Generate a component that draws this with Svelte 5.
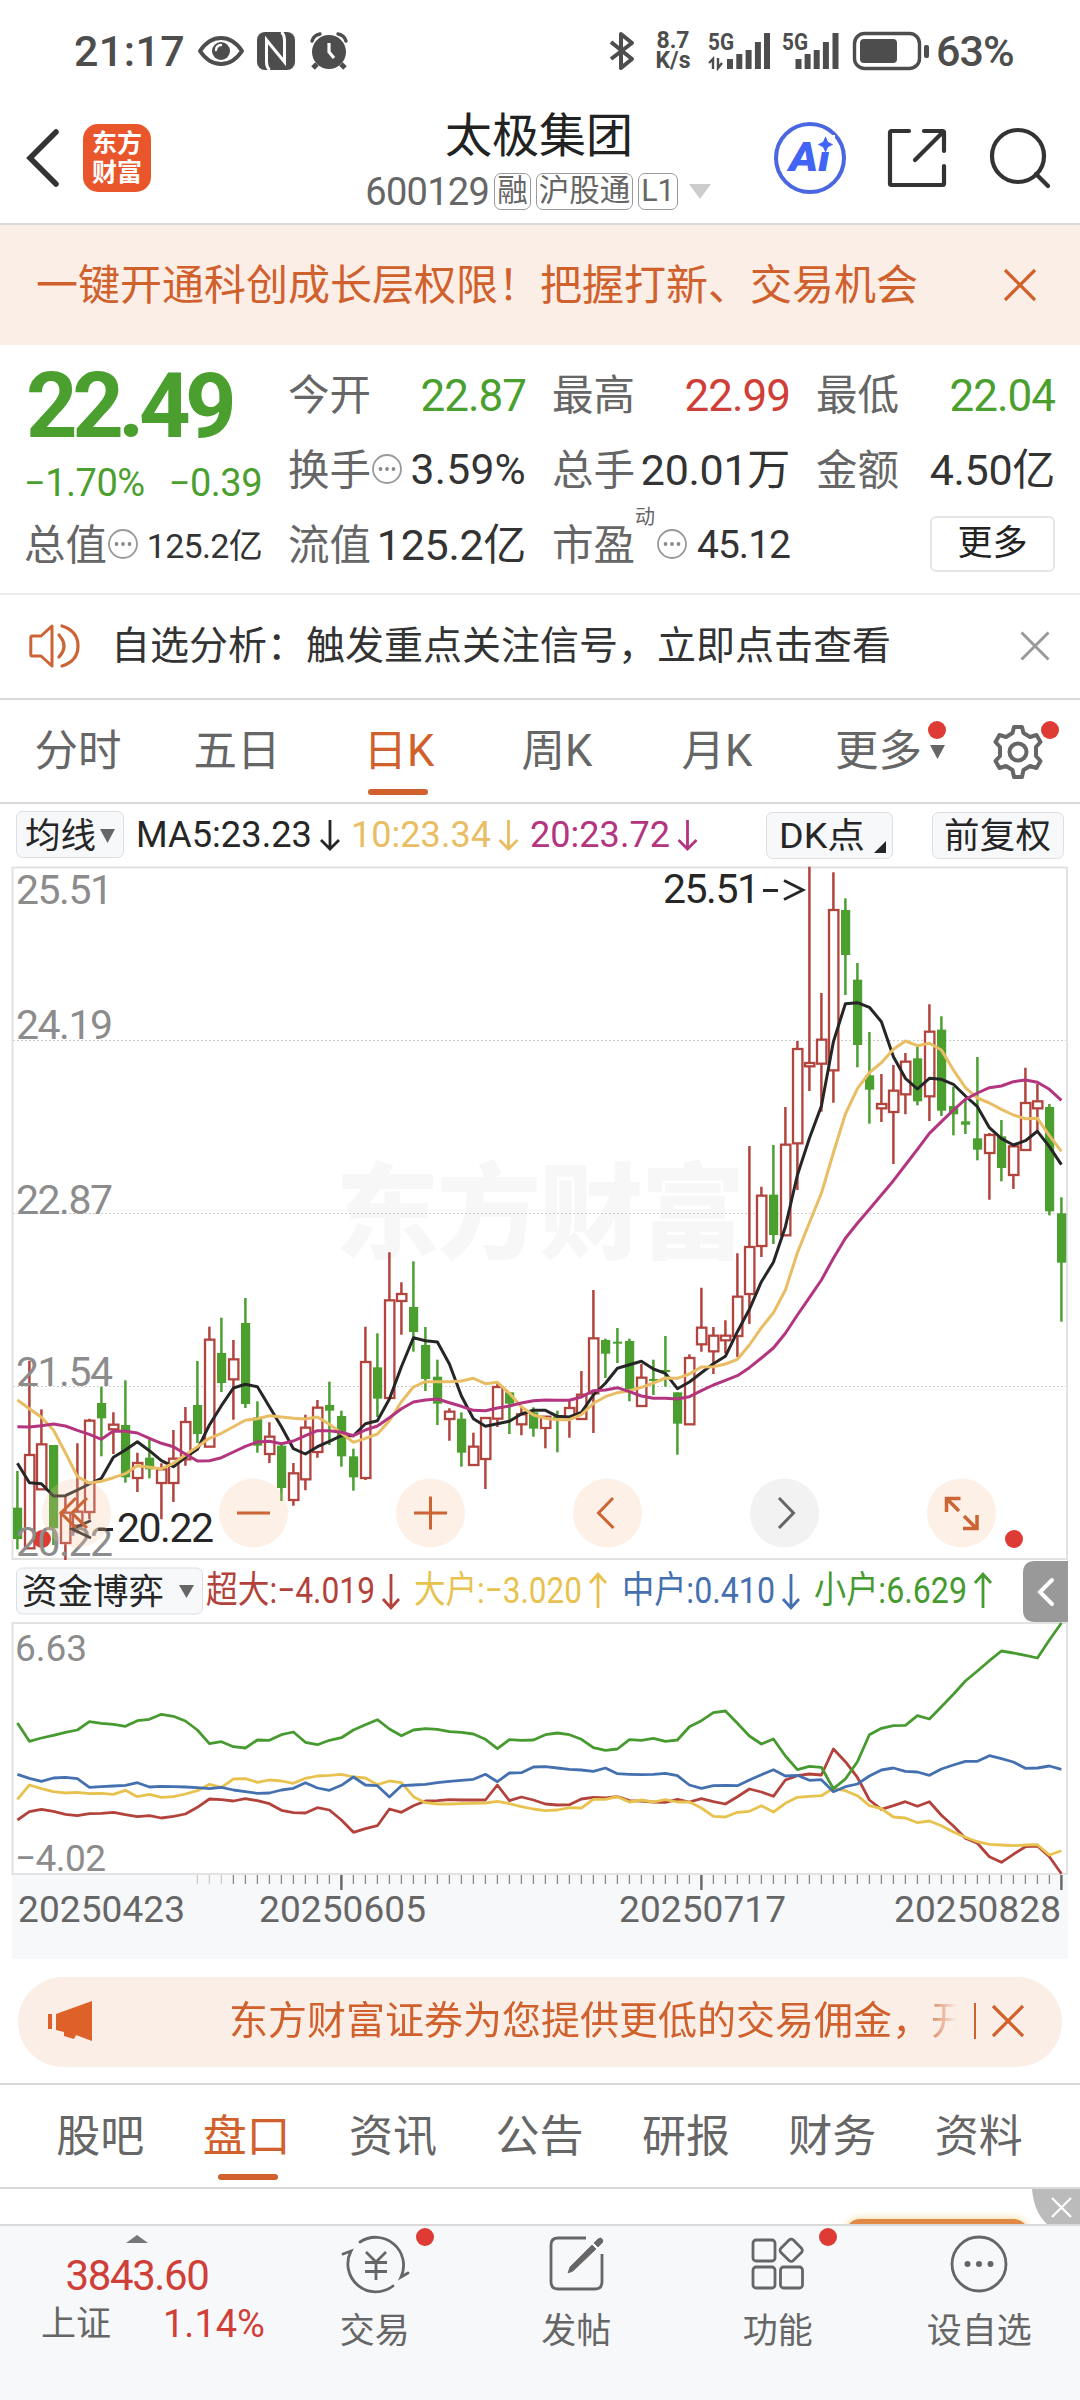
<script>
  // 日K: [涨跌, 最高, 实体上沿, 实体下沿, 最低], 单位是 1/3 像素
  const candles = [
    ['g', 873, 983, 1077, 1108], ['r', 543, 825, 1105, 1105], ['r', 688, 793, 928, 928],
    ['g', 795, 795, 1045, 1095], ['r', 950, 998, 1089, 1140], ['r', 790, 995, 1037, 1060],
    ['r', 716, 722, 996, 1018], ['g', 620, 669, 715, 829], ['r', 697, 734, 748, 822],
    ['g', 601, 735, 892, 908], ['r', 818, 849, 894, 936], ['g', 775, 833, 868, 895],
    ['r', 850, 868, 909, 1018], ['r', 750, 836, 909, 966], ['r', 681, 726, 838, 857],
    ['g', 543, 675, 762, 789], ['r', 440, 479, 800, 800], ['g', 413, 519, 609, 636],
    ['r', 480, 538, 598, 719], ['g', 354, 429, 672, 684], ['g', 664, 712, 797, 818],
    ['r', 727, 770, 822, 849], ['g', 795, 797, 924, 963], ['r', 849, 880, 960, 977],
    ['r', 704, 743, 898, 931], ['r', 660, 683, 816, 833], ['g', 605, 675, 692, 795],
    ['g', 692, 708, 829, 860], ['g', 806, 829, 892, 932], ['r', 440, 546, 894, 900],
    ['g', 460, 562, 656, 711], ['r', 217, 361, 654, 654], ['r', 307, 342, 363, 464],
    ['g', 244, 381, 456, 515], ['g', 441, 495, 597, 633], ['g', 539, 590, 671, 735],
    ['r', 685, 695, 717, 782], ['g', 697, 716, 818, 860], ['r', 758, 800, 855, 855],
    ['r', 714, 714, 837, 927], ['r', 611, 621, 716, 741], ['g', 637, 637, 671, 762],
    ['r', 680, 703, 733, 766], ['g', 682, 697, 746, 770], ['r', 710, 710, 744, 805],
    ['g', 692, 709, 714, 817], ['r', 660, 684, 712, 773], ['r', 573, 644, 717, 717],
    ['r', 330, 475, 640, 759], ['g', 476, 480, 521, 594], ['g', 444, 485, 491, 549],
    ['g', 476, 483, 628, 664], ['r', 552, 593, 678, 681], ['g', 539, 597, 602, 645],
    ['g', 468, 570, 575, 620], ['g', 637, 637, 731, 824], ['r', 523, 534, 733, 733],
    ['r', 323, 443, 493, 515], ['r', 441, 467, 514, 582], ['r', 421, 467, 481, 520],
    ['r', 220, 350, 468, 531], ['r', -102, 201, 342, 432], ['r', 20, 47, 198, 231],
    ['g', -105, 44, 165, 192], ['r', -219, -106, 166, 166], ['r', -417, -393, -110, 30],
    ['r', -940, -351, -341, -267], ['r', -561, -421, -349, -205], ['r', -923, -810, -329, -232],
    ['g', -845, -810, -675, -555], ['g', -651, -601, -405, -338], ['g', -444, -314, -271, -169],
    ['r', -318, -228, -215, -174], ['r', -345, -268, -204, -48], ['r', -381, -355, -257, -197],
    ['g', -408, -365, -236, -224], ['r', -527, -445, -251, -177], ['g', -491, -451, -208, -192],
    ['g', -280, -222, -197, -134], ['g', -245, -176, -166, -138], ['g', -369, -125, -91, -59],
    ['r', -141, -135, -81, 59], ['g', -180, -131, -36, 4], ['r', -105, -101, -15, 27],
    ['r', -337, -231, -90, -87], ['r', -288, -236, -215, -145], ['g', -228, -219, 94, 106],
    ['g', 52, 100, 248, 425],
  ];

  const ma5 = [
    850, 908, 911, 948, 947, 930, 912, 895, 832, 810, 785, 812, 842, 860, 832, 808, 735, 677, 624, 613, 620, 680,
    740, 806, 822, 800, 784, 767, 767, 731, 722, 657, 560, 473, 482, 486, 552, 648, 716, 739, 731, 724, 702, 691,
    691, 709, 711, 697, 645, 610, 565, 554, 544, 567, 580, 626, 606, 578, 551, 529, 455, 388, 305, 247, 140, -15,
    -125, -222, -415, -529, -532, -518, -475, -370, -305, -273, -305, -302, -287, -252, -220, -157, -124, -105,
    -118, -146, -100, -46,
  ];
  const ma10 = [
    660, 686, 712, 750, 818, 890, 909, 904, 893, 881, 857, 862, 866, 850, 825, 800, 775, 760, 740, 721, 716, 707,
    711, 715, 717, 711, 733, 760, 787, 775, 762, 722, 665, 621, 605, 605, 605, 603, 595, 611, 607, 640, 680, 705,
    715, 719, 719, 704, 670, 650, 638, 632, 622, 609, 594, 595, 582, 561, 560, 552, 538, 495, 443, 398, 330, 218,
    128, 40, -82, -198, -274, -322, -352, -392, -417, -403, -410, -390, -330, -277, -246, -231, -212, -195, -184,
    -185, -133, -86,
  ];
  const ma20 = [
    740, 741, 737, 732, 738, 751, 763, 778, 753, 754, 759, 775, 790, 800, 822, 843, 842, 833, 816, 799, 786, 784,
    791, 783, 767, 752, 752, 757, 767, 750, 738, 713, 686, 666, 660, 657, 668, 679, 691, 692, 684, 678, 669, 662,
    660, 661, 661, 651, 632, 630, 623, 635, 648, 655, 655, 657, 650, 632, 615, 601, 587, 563, 534, 504, 460, 405,
    353, 300, 235, 175, 130, 88, 45, 2, -45, -92, -140, -175, -210, -242, -261, -277, -282, -295, -300, -293,
    -272, -239,
  ];

  // 资金博弈四条线
  const flows = [
    {
      color: '#b2423b',
      data: [
        840, 815, 808, 814, 823, 827, 821, 820, 817, 824, 830, 827, 834, 829, 822, 802, 777, 779, 783, 776, 782, 791,
        811, 818, 819, 803, 810, 840, 877, 866, 857, 807, 817, 797, 783, 782, 779, 780, 780, 780, 735, 782, 771, 780,
        792, 795, 794, 777, 772, 774, 770, 782, 783, 786, 787, 778, 786, 776, 785, 792, 770, 747, 756, 769, 720, 707,
        702, 705, 627, 665, 712, 780, 808, 797, 785, 799, 785, 826, 858, 895, 910, 950, 967, 943, 920, 918, 950, 1001,
      ],
    },
    {
      color: '#e8c24e',
      data: [
        778, 735, 746, 755, 759, 757, 761, 760, 763, 751, 770, 763, 772, 770, 762, 752, 733, 742, 717, 716, 727, 720,
        723, 730, 715, 708, 706, 703, 711, 714, 734, 723, 728, 770, 788, 792, 792, 791, 790, 789, 784, 791, 800, 807,
        812, 810, 803, 804, 778, 778, 770, 786, 780, 786, 779, 786, 786, 804, 829, 831, 817, 814, 797, 816, 790, 772,
        769, 767, 745, 752, 767, 797, 806, 831, 834, 848, 843, 857, 876, 892, 905, 913, 915, 917, 915, 914, 945, 932,
      ],
    },
    {
      color: '#4470b0',
      data: [
        703, 715, 724, 714, 712, 716, 742, 740, 738, 736, 728, 741, 739, 740, 741, 743, 746, 742, 750, 755, 760, 759,
        750, 745, 728, 744, 751, 736, 711, 735, 737, 771, 737, 735, 733, 728, 724, 721, 718, 703, 725, 699, 698, 681,
        680, 684, 688, 690, 694, 684, 701, 703, 704, 703, 700, 707, 735, 745, 737, 736, 737, 720, 704, 689, 708, 706,
        721, 719, 755, 740, 732, 708, 690, 684, 694, 696, 706, 687, 675, 664, 664, 647, 656, 666, 685, 684, 678, 688,
      ],
    },
    {
      color: '#479a30',
      data: [
        549, 604, 594, 586, 577, 570, 545, 550, 553, 559, 542, 538, 523, 529, 543, 570, 611, 605, 620, 624, 600, 601,
        584, 576, 607, 614, 601, 593, 570, 554, 539, 567, 587, 570, 566, 568, 575, 577, 582, 598, 626, 599, 601, 600,
        584, 579, 584, 598, 623, 631, 627, 599, 601, 595, 604, 600, 560, 542, 518, 513, 550, 588, 612, 597, 648, 689,
        679, 682, 746, 717, 665, 584, 565, 557, 556, 527, 537, 500, 463, 423, 393, 362, 333, 339, 346, 354, 300, 249,
      ],
    },
  ];

  const xAt = (i) => 17.4 + i * 12;
  const kY = (v) => (v + 942) / 3;
  const flowY = (v) => (v - 249) / 3 + 1;
  const path = (arr, y) => 'M' + arr.map((v, i) => `${xAt(i).toFixed(1)} ${y(v).toFixed(1)}`).join('L');

  const averages = [
    { color: '#262626', d: path(ma5, kY) },
    { color: '#e8bd63', d: path(ma10, kY) },
    { color: '#b4357f', d: path(ma20, kY) },
  ];
  const priceLabels = [
    { text: '25.51', y: 38 },
    { text: '24.19', y: 173 },
    { text: '22.87', y: 348 },
    { text: '21.54', y: 520 },
    { text: '20.22', y: 690 },
  ];
  const ticks = Array.from({ length: 73 }, (_, k) => k + 15);
  const majors = [27, 57, 87];
  const dates = [
    { text: '20250423', x: 18 },
    { text: '20250605', x: 259 },
    { text: '20250717', x: 619 },
    { text: '20250828', x: 894 },
  ];
  const flowLegend = [
    { text: '超大:−4.019', x: 206, w: 169, color: '#b2423b', up: false },
    { text: '大户:−3.020', x: 414, w: 168, color: '#e8c24e', up: true },
    { text: '中户:0.410', x: 622, w: 153, color: '#4470b0', up: false },
    { text: '小户:6.629', x: 814, w: 153, color: '#479a30', up: true },
  ];

  const periods = ['分时', '五日', '日K', '周K', '月K', '更多'];
  let period = '日K';
  const sections = ['股吧', '盘口', '资讯', '公告', '研报', '财务', '资料'];
  let section = '盘口';
</script>

<div class="screen">
  <div class="status">
    <span class="time">21:17</span>
    <svg class="eye" width="46" height="32" viewBox="0 0 46 32">
      <path d="M2 16C8 7 15 3 23 3s15 4 21 13c-6 9-13 13-21 13S8 25 2 16Z" fill="none" stroke="#4d4d4d" stroke-width="4" stroke-linejoin="round" />
      <circle cx="23" cy="16" r="9" fill="#4d4d4d" />
      <path d="M18 15a5.5 5.5 0 0 1 5-5" fill="none" stroke="#fff" stroke-width="2.4" stroke-linecap="round" />
    </svg>
    <svg class="nfc" width="38" height="38" viewBox="0 0 38 38">
      <rect width="38" height="38" rx="8" fill="#4d4d4d" />
      <path d="M9.500 31V8l18 22V7M9.500 30q0 5 3 8M27.500 8q0-5-3-8" fill="none" stroke="#fff" stroke-width="3" />
    </svg>
    <svg class="alarm" width="38" height="38" viewBox="0 0 38 38">
      <circle cx="19" cy="20" r="17" fill="#4d4d4d" />
      <path d="M7 32l-4 4M31 32l4 4" stroke="#4d4d4d" stroke-width="5" />
      <path d="M2 9a10 10 0 0 1 8-7M36 9a10 10 0 0 0-8-7" fill="none" stroke="#4d4d4d" stroke-width="3.4" stroke-linecap="round" />
      <path d="M19 11v9l5 6" fill="none" stroke="#fff" stroke-width="3.2" />
    </svg>
    <div class="status-right">
      <svg width="26" height="38" viewBox="0 0 26 38">
        <path d="M2 10l21 17-11 9V2l11 9L2 27" fill="none" stroke="#4d4d4d" stroke-width="4" stroke-linejoin="round" />
      </svg>
      <div class="speed"><span>8.7</span><span>K/s</span></div>
      <svg class="sig1" width="62" height="40" viewBox="0 0 62 40">
        <text x="0" y="19" textLength="26" lengthAdjust="spacingAndGlyphs" class="g5">5G</text>
        <path d="M5 38V28l-4 4M10 27v10l4-5" fill="none" stroke="#4d4d4d" stroke-width="2.4" />
        <path d="M22 28v10M31.300 23v15M40.600 19v19M49.900 11v27M59 2v36" stroke="#4d4d4d" stroke-width="6" stroke-linecap="butt" />
      </svg>
      <svg class="sig2" width="57" height="40" viewBox="0 0 57 40">
        <text x="0" y="19" textLength="26" lengthAdjust="spacingAndGlyphs" class="g5">5G</text>
        <path d="M16.500 28v10M25.600 23v15M34.700 19v19M43.900 11v27M53.500 2v36" stroke="#4d4d4d" stroke-width="6" />
      </svg>
      <svg class="battery" width="77" height="38" viewBox="0 0 77 38">
        <rect x="1.500" y="1.500" width="65" height="35" rx="10" fill="none" stroke="#4d4d4d" stroke-width="3.400" />
        <rect x="7" y="7" width="37" height="24" rx="4" fill="#4d4d4d" />
        <rect x="71" y="13" width="5" height="13" rx="2" fill="#4d4d4d" />
      </svg>
      <span class="percent">63%</span>
    </div>
  </div>

  <header>
    <svg class="back" width="34" height="58" viewBox="0 0 34 58">
      <path d="M30 3L4 29l26 26" fill="none" stroke="#333" stroke-width="5.500" stroke-linecap="round" />
    </svg>
    <div class="logo"><span>东方</span><span>财富</span></div>
    <div class="heading">
      <h1>太极集团</h1>
      <div class="code">
        <span class="num">600129</span>
        <span class="tag">融</span>
        <span class="tag">沪股通</span>
        <span class="tag">L1</span>
        <svg width="22" height="15" viewBox="0 0 22 15"><path d="M0 0h22L11 15Z" fill="#ccc" /></svg>
      </div>
    </div>
    <div class="tools">
      <svg width="74" height="74" viewBox="0 0 74 74">
        <circle cx="37" cy="37" r="34" fill="#fff" stroke="#4a66e0" stroke-width="4" />
        <text x="16" y="50" class="ai" textLength="41" lengthAdjust="spacingAndGlyphs">Ai</text>
        <rect x="44" y="14" width="18" height="17" fill="#fff" />
        <path d="M52.500 17l2 4.500 4 2-4 2-2 4.500-2-4.500-4-2 4-2Z" fill="#4264f5" stroke="#4264f5" stroke-width="1.500" />
      </svg>
      <svg width="60" height="60" viewBox="0 0 60 60">
        <path d="M22 3H4.500Q3 3 3 4.500v51Q3 57 4.500 57h51q1.500 0 1.500-1.500V38M37 3h18.500Q57 3 57 4.500V23M56 4L28 32" fill="none" stroke="#333" stroke-width="4.200" stroke-linecap="round" />
      </svg>
      <svg width="62" height="62" viewBox="0 0 62 62">
        <circle cx="29" cy="29" r="26" fill="none" stroke="#333" stroke-width="4.200" />
        <path d="M47 47l12 12" stroke="#333" stroke-width="4.200" stroke-linecap="round" />
      </svg>
    </div>
  </header>

  <div class="banner">
    <span>一键开通科创成长层权限！把握打新、交易机会</span>
    <svg width="34" height="34" viewBox="0 0 34 34"><path d="M2 2l30 30M32 2L2 32" stroke="#d0602c" stroke-width="3.200" /></svg>
  </div>

  {#snippet dots()}
    <svg class="dots" width="32" height="32" viewBox="0 0 32 32">
      <circle cx="16" cy="16" r="14" fill="none" stroke="#999" stroke-width="1.800" />
      <circle cx="9.500" cy="16" r="1.900" fill="#888" /><circle cx="16" cy="16" r="1.900" fill="#888" /><circle cx="22.500" cy="16" r="1.900" fill="#888" />
    </svg>
  {/snippet}

  <section class="quote">
    <div class="price-box">
      <strong>22.49</strong>
      <div class="change"><span>−1.70%</span><span>−0.39</span></div>
    </div>
    <div class="cell"><span class="name">今开</span><b class="down big">22.87</b></div>
    <div class="cell"><span class="name">最高</span><b class="up big">22.99</b></div>
    <div class="cell"><span class="name">最低</span><b class="down big">22.04</b></div>
    <div class="cell"><span class="name">换手</span>{@render dots()}<b class="mid">3.59%</b></div>
    <div class="cell"><span class="name">总手</span><b>20.01万</b></div>
    <div class="cell"><span class="name">金额</span><b>4.50亿</b></div>
    <div class="cell"><span class="name">总值</span>{@render dots()}<b class="small">125.2亿</b></div>
    <div class="cell"><span class="name">流值</span><b>125.2亿</b></div>
    <div class="cell pe"><span class="name">市盈<sup>动</sup></span>{@render dots()}<b>45.12</b></div>
    <div class="cell"><button class="more">更多</button></div>
  </section>

  <div class="notice">
    <svg width="52" height="46" viewBox="0 0 52 46">
      <path d="M3 13h9L23 3v40L12 33H3Q1.800 33 1.800 31V15Q1.800 13 3 13Z" fill="none" stroke="#cc6436" stroke-width="3" stroke-linejoin="round" />
      <path d="M30 12q10 11 0 22M33 3q16 5 16 20T33 43" fill="none" stroke="#cc6436" stroke-width="3.200" stroke-linecap="round" />
    </svg>
    <span>自选分析：触发重点关注信号，立即点击查看</span>
    <svg width="30" height="30" viewBox="0 0 30 30"><path d="M1.500 1.500l27 27M28.500 1.500l-27 27" stroke="#999" stroke-width="3" /></svg>
  </div>

  <nav class="periods">
    {#each periods as p}
      <button class:active={p === period} on:click={() => (period = p)}>
        {p}
        {#if p === '更多'}
          <i class="dot"></i>
          <svg class="caret" width="15" height="14" viewBox="0 0 15 14"><path d="M0 0h15L7.500 14Z" fill="#666" /></svg>
        {/if}
      </button>
    {/each}
    <div class="gear">
      <svg width="56" height="56" viewBox="0 0 56 56">
        <path d="M22.500 9L24 3h8l1.500 6 6.500 4 6.500-2 4 7-4.500 5v9l4.500 5-4 7-6.500-2-6.500 4L32 53h-8l-1.500-7-6.500-4-6.500 2-4-7 4.500-5v-9l-4.500-5 4-7 6.500 2Z" fill="none" stroke="#666" stroke-width="4" stroke-linejoin="round" />
        <circle cx="28" cy="28" r="8.500" fill="none" stroke="#666" stroke-width="4" />
      </svg>
      <i class="dot"></i>
    </div>
  </nav>

  <svg class="legend" width="1080" height="62" viewBox="0 0 1080 62">
    <g class="chip">
      <rect x="16.500" y="7.500" width="107" height="46" rx="6" />
      <rect x="766.500" y="8.500" width="126" height="46" rx="6" />
      <rect x="932.500" y="8.500" width="131" height="46" rx="6" />
    </g>
    <text x="25" y="44" textLength="71" fill="#262626" class="t35">均线</text>
    <path d="M100 25h15l-7.500 14Z" fill="#666" />
    <text x="136" y="43" textLength="176" lengthAdjust="spacingAndGlyphs" fill="#262626">MA5:23.23</text>
    <path class="arrow" d="M330 16v29M321 36l9 9 9-9" stroke="#262626" />
    <text x="351" y="43" textLength="140" lengthAdjust="spacingAndGlyphs" fill="#e8bd63">10:23.34</text>
    <path class="arrow" d="M508.500 16v29M499.500 36l9 9 9-9" stroke="#e8bd63" />
    <text x="530" y="43" textLength="140" lengthAdjust="spacingAndGlyphs" fill="#b4357f">20:23.72</text>
    <path class="arrow" d="M687.500 16v29M678.500 36l9 9 9-9" stroke="#b4357f" />
    <text x="779" y="44" textLength="86" lengthAdjust="spacingAndGlyphs" fill="#262626" class="t35 dk">DK点</text>
    <path d="M886 37v12h-12Z" fill="#262626" />
    <text x="944" y="44" textLength="107" fill="#262626" class="t35">前复权</text>
  </svg>

  <svg class="kline" width="1080" height="694" viewBox="0 0 1080 694">
    <text class="watermark" x="335" y="385" textLength="410">东方财富</text>
    <path d="M13 174.500H1067M13 347.500H1067M13 520.500H1067" stroke="#ccc" stroke-dasharray="2 2" />
    <rect x="12.500" y="1.500" width="1054.500" height="691.500" fill="none" stroke="#e2e2e2" stroke-width="2" />
    {#each candles as [kind, high, top, bottom, low], i}
      {#if kind === 'g'}
        <path d="M{xAt(i)} {kY(high)}V{kY(low)}" stroke="#4a9f2f" stroke-width="2.500" />
        <rect x={xAt(i) - 4.4} y={kY(top)} width="9.200" height={Math.max(kY(bottom) - kY(top), 2)} fill="#4a9f2f" />
      {:else}
        <path d="M{xAt(i)} {kY(high)}V{kY(top)}M{xAt(i)} {kY(bottom)}V{kY(low)}" stroke="#b2443e" stroke-width="2.500" />
        <rect x={xAt(i) - 4.4} y={kY(top)} width="9.400" height={kY(bottom) - kY(top)} fill="#fff" stroke="#b2443e" stroke-width="2.300" />
      {/if}
    {/each}
    {#each averages as line}
      <path d={line.d} fill="none" stroke={line.color} stroke-width="3" stroke-linejoin="round" />
    {/each}
    <circle cx="42" cy="673" r="9" fill="#dd3b33" />
    {#each priceLabels as label}
      <text x="16" y={label.y} textLength="97" class="price">{label.text}</text>
    {/each}
    <text x="663" y="37" textLength="97" class="mark">25.51</text>
    <path d="M763 24.500h15M784 14.500l19 9.500-19 9.500" class="mark-line" />
    <text x="117" y="676" textLength="97" class="mark">20.22</text>
    <path d="M98 663.500h15M91 654.500L72 663l19 9" class="mark-line" />

    <g fill="#f2c29e" fill-opacity="0.250">
      <circle cx="76.500" cy="647" r="34.500" />
      <circle cx="253.500" cy="647" r="34.500" />
      <circle cx="430.500" cy="647" r="34.500" />
      <circle cx="607.500" cy="647" r="34.500" />
      <circle cx="961.500" cy="647" r="34.500" />
    </g>
    <circle cx="784.500" cy="647" r="34.500" fill="#f2f2f2" />
    <g fill="none" stroke="#cc6433" stroke-width="3">
      <path d="M76 632L61 647l15 15M87 632L72 647l15 15" />
      <path d="M237 647h33M414 647h33M430.500 630.500v33" />
      <path d="M613 632L598.500 647l15 15" />
      <path d="M946.500 646v-13.500h14M947 633l12 12M977 649v13.500h-14M976 662l-12-12" stroke-width="3.500" />
    </g>
    <path d="M779 632l14.500 15L779 662" fill="none" stroke="#666" stroke-width="3" />
    <circle cx="1014" cy="673" r="9" fill="#dd3b33" />
  </svg>

  <svg class="legend" width="1080" height="62" viewBox="0 0 1080 62">
    <g class="chip"><rect x="16.500" y="8" width="186" height="46" rx="6" /></g>
    <text x="22" y="44" textLength="142" fill="#262626" class="t35">资金博弈</text>
    <path d="M179 25h15l-7.500 13Z" fill="#666" />
    {#each flowLegend as f}
      <text x={f.x} y="43" textLength={f.w} lengthAdjust="spacingAndGlyphs" fill={f.color}>{f.text}</text>
      {#if f.up}
        <path class="arrow" d="M{f.x + f.w + 16} 48V14M{f.x + f.w + 8} 23l8-9 8 9" stroke={f.color} />
      {:else}
        <path class="arrow" d="M{f.x + f.w + 16} 14v34M{f.x + f.w + 8} 39l8 9 8-9" stroke={f.color} />
      {/if}
    {/each}
    <path d="M1068 1h-33q-12 0-12 12v37q0 12 12 12h33Z" fill="#999" />
    <path d="M1052 20L1040 32l12 12" fill="none" stroke="#fff" stroke-width="4" stroke-linecap="round" />
  </svg>

  <svg class="flow" width="1080" height="337" viewBox="0 0 1080 337">
    <rect x="12" y="252" width="1056" height="85" fill="#f7f8fa" />
    <rect x="12.500" y="1" width="1054.500" height="251" fill="#fff" stroke="#e2e2e2" stroke-width="2" />
    <text x="15" y="39" textLength="72" class="price t36">6.63</text>
    <text x="15" y="249" textLength="91" class="price t36">−4.02</text>
    {#each flows as f}
      <path d={path(f.data, flowY)} fill="none" stroke={f.color} stroke-width="2.800" stroke-linejoin="round" />
    {/each}
    {#each ticks as t}
      <path d="M{xAt(t)} 253v9" stroke={t < 18 ? '#ccc' : '#888'} stroke-width="1.300" />
    {/each}
    {#each majors as m}
      <path d="M{xAt(m)} 253v15" stroke="#666" stroke-width="2.400" />
    {/each}
    {#each dates as d}
      <text x={d.x} y="300" textLength="167" class="date">{d.text}</text>
    {/each}
  </svg>

  <div class="promo">
    <svg width="46" height="40" viewBox="0 0 46 40">
      <path d="M2 13v15" stroke="#dd6128" stroke-width="4" />
      <path d="M8 13L44 0v40L28 34l-2 4-10-3 0-4-8-2Z" fill="#dd6128" />
    </svg>
    <div class="marquee">东方财富证券为您提供更低的交易佣金，开户</div>
    <i class="bar"></i>
    <svg width="34" height="34" viewBox="0 0 34 34"><path d="M2 2l30 30M32 2L2 32" stroke="#d0602c" stroke-width="3.200" /></svg>
  </div>

  <nav class="sections">
    {#each sections as s}
      <button class:active={s === section} on:click={() => (section = s)}>{s}</button>
    {/each}
  </nav>

  <div class="peek">
    <i class="cta"></i>
    <svg width="48" height="36" viewBox="0 0 48 36">
      <path d="M0 0h48v36H16Q2 24 0 0Z" fill="#bbb" />
      <path d="M20 9l19 19M39 9L20 28" stroke="#fff" stroke-width="2.200" />
    </svg>
  </div>

  <footer>
    <div class="index">
      <svg width="22" height="8" viewBox="0 0 22 8"><path d="M11 0l11 8H0Z" fill="#777" /></svg>
      <span class="points">3843.60</span>
      <div class="row"><span>上证</span><span class="pct">1.14%</span></div>
    </div>
    <div class="item">
      <svg width="70" height="62" viewBox="0 0 70 62" fill="none" stroke="#666" stroke-width="2.800">
        <path d="M20 9A28 28 0 0 1 61 44l7-4M53 53A28 28 0 0 1 11 18l-8 3" stroke-linecap="round" />
        <path d="M26 19l10 10 10-10M36 28v19M25 29.500h22M25 38.500h22" />
      </svg>
      <i class="dot"></i>
      <span>交易</span>
    </div>
    <div class="item">
      <svg width="56" height="62" viewBox="0 0 56 62">
        <path d="M38 5H10q-7 0-7 7v37q0 7 7 7h37q7 0 7-7V21" fill="none" stroke="#666" stroke-width="2.800" />
        <path d="M44 12l4 4-23 22-5 2 2-6ZM46 10l4-4q3-2 4 0 2 2 0 4l-4 4Z" fill="#666" stroke="#666" stroke-width="0.800" />
      </svg>
      <span>发帖</span>
    </div>
    <div class="item">
      <svg width="54" height="62" viewBox="0 0 54 62" fill="none" stroke="#666" stroke-width="2.800">
        <rect x="2" y="7" width="22" height="21" rx="3" />
        <rect x="2" y="34" width="22" height="21" rx="3" />
        <rect x="29.500" y="34" width="22" height="21" rx="3" />
        <rect x="31.500" y="8.500" width="17.500" height="17.500" rx="3" transform="rotate(45 40.200 17.200)" />
      </svg>
      <i class="dot"></i>
      <span>功能</span>
    </div>
    <div class="item">
      <svg width="58" height="62" viewBox="0 0 58 62">
        <circle cx="29" cy="31" r="27" fill="none" stroke="#666" stroke-width="2.800" />
        <circle cx="17.500" cy="31" r="3" fill="#666" /><circle cx="29" cy="31" r="3" fill="#666" /><circle cx="40.500" cy="31" r="3" fill="#666" />
      </svg>
      <span>设自选</span>
    </div>
  </footer>
</div>

<style>
  :global(body) {
    margin: 0;
    background: #fff;
  }
  .screen {
    width: 1080px;
    height: 2400px;
    overflow: hidden;
    display: flex;
    flex-direction: column;
    background: #fff;
    color: #333;
    font-family: Roboto, 'Noto Sans CJK SC', sans-serif;
    line-height: 1;
  }
  .screen > * {
    flex: none;
    box-sizing: border-box;
  }
  svg {
    display: block;
    flex: none;
    overflow: visible;
  }
  button {
    border: 0;
    padding: 0;
    background: none;
    font: inherit;
    color: inherit;
  }
  .dot {
    position: absolute;
    width: 18px;
    height: 18px;
    border-radius: 50%;
    background: #dd3b33;
  }

  /* 状态栏 */
  .status {
    height: 100px;
    padding: 2px 67px 0 74px;
    display: flex;
    align-items: center;
    color: #4d4d4d;
    font-weight: 500;
  }
  .time {
    width: 124px;
    font-size: 43px;
    letter-spacing: 0.400px;
  }
  .nfc {
    margin-left: 13px;
  }
  .alarm {
    margin-left: 15px;
  }
  .status-right {
    margin-left: auto;
    display: flex;
    align-items: center;
  }
  .status-right > svg:first-child {
    margin-right: 2px;
  }
  .speed {
    width: 40px;
    margin-left: 16px;
    display: flex;
    flex-direction: column;
    align-items: center;
    font-size: 23px;
    line-height: 20px;
    font-weight: 700;
  }
  .sig1 {
    margin-left: 15px;
  }
  .sig2 {
    margin-left: 12px;
  }
  .g5 {
    font-size: 24px;
    font-weight: 700;
    fill: #4d4d4d;
  }
  .battery {
    margin-left: 14px;
  }
  .percent {
    width: 77px;
    margin-left: 6px;
    font-size: 43px;
    letter-spacing: -1px;
  }

  header {
    height: 125px;
    padding: 0 29px 0 26px;
    display: flex;
    align-items: center;
    border-bottom: 2px solid #d9d9d9;
  }
  .back {
    margin-top: -8px;
  }
  .logo {
    width: 68px;
    height: 68px;
    margin: -8px 0 0 23px;
    border-radius: 15px;
    background: #e9562b;
    color: #fff;
    display: flex;
    flex-direction: column;
    align-items: center;
    justify-content: center;
    font-size: 25px;
    line-height: 29px;
    font-weight: 700;
  }
  .heading {
    width: 400px;
    margin: -2px 0 0 188px;
    display: flex;
    flex-direction: column;
    align-items: center;
  }
  h1 {
    margin: 0;
    height: 62px;
    font-size: 47px;
    line-height: 49px;
    font-weight: 400;
    color: #222;
  }
  .code {
    height: 38px;
    margin-left: -2px;
    display: flex;
    align-items: center;
    gap: 5px;
    color: #666;
  }
  .num {
    font-size: 38px;
    letter-spacing: -0.700px;
  }
  .tag {
    height: 35px;
    padding: 0 2px;
    border: 1.500px solid #999;
    border-radius: 7px;
    font-size: 30.500px;
    line-height: 34px;
  }
  .code svg {
    margin-left: 6px;
  }
  .tools {
    margin: -8px 0 0 auto;
    display: flex;
    align-items: center;
    gap: 40px;
  }
  .tools svg:last-child {
    margin-left: 2px;
  }
  .ai {
    font-size: 40px;
    font-weight: 900;
    font-style: italic;
    fill: #4264f5;
  }

  .banner {
    height: 120px;
    padding: 2px 43px 0 36px;
    display: flex;
    align-items: center;
    justify-content: space-between;
    background: #fbeee6;
    color: #d0602c;
    font-size: 42px;
  }
  .banner svg {
    margin-top: -2px;
  }

  /* 行情 */
  .quote {
    height: 250px;
    padding: 13px 25px 0 24px;
    display: grid;
    grid-template-columns: 238px 238px 238px 239px;
    grid-template-rows: 75px 75px 75px;
    column-gap: 26px;
    border-bottom: 2px solid #ececec;
  }
  .price-box {
    grid-row: 1 / 3;
    color: #4a9f2f;
  }
  .price-box strong {
    display: block;
    height: 86px;
    padding: 12px 0 0 2px;
    font-size: 90px;
    line-height: 74px;
    letter-spacing: -5.500px;
    font-weight: 700;
  }
  .change {
    display: flex;
    justify-content: space-between;
    padding-top: 8px;
    font-size: 38px;
    letter-spacing: -0.500px;
  }
  .cell {
    display: flex;
    align-items: center;
    height: 75px;
    white-space: nowrap;
  }
  .name {
    position: relative;
    font-size: 41.500px;
    color: #666;
  }
  .cell b {
    margin-left: auto;
    font-size: 43px;
    font-weight: 400;
    letter-spacing: -0.300px;
    color: #333;
  }
  .cell b.big {
    font-size: 44px;
    letter-spacing: -1px;
  }
  .cell b.mid {
    font-size: 42.500px;
    letter-spacing: 0.300px;
  }
  .cell b.small {
    font-size: 34px;
    letter-spacing: -0.700px;
  }
  .cell .up {
    color: #cf3f38;
  }
  .cell .down {
    color: #4a9f2f;
  }
  .dots {
    margin-top: -4px;
  }
  sup {
    position: absolute;
    top: -18px;
    right: -20px;
    font-size: 20px;
    line-height: 20px;
  }
  .pe .dots {
    margin-left: 21px;
  }
  .pe b {
    font-size: 39px;
    letter-spacing: -1px;
  }
  .more {
    width: 125px;
    height: 56px;
    margin: -3px 0 0 auto;
    border: 2px solid #e6e6e6;
    border-radius: 6px;
    font-size: 35px;
    line-height: 46px;
    color: #222;
  }

  .notice {
    height: 105px;
    padding: 0 30px 1px 29px;
    display: flex;
    align-items: center;
    border-bottom: 2px solid #d9d9d9;
    font-size: 39px;
  }
  .notice span {
    margin-left: 30px;
    margin-right: auto;
  }

  .periods {
    height: 104px;
    display: grid;
    grid-template-columns: 156px 162px 162px 154px 166px 157px 123px;
    border-bottom: 2px solid #d9d9d9;
    color: #666;
    font-size: 43.500px;
  }
  .periods button {
    position: relative;
    padding-top: 2px;
  }
  .periods .active,
  .sections .active {
    color: #d0602c;
  }
  .active::after {
    content: '';
    position: absolute;
    left: 50%;
    bottom: 7px;
    width: 60px;
    height: 6px;
    margin-left: -31px;
    border-radius: 3px;
    background: #d0602c;
  }
  .periods button .dot {
    top: 21px;
    right: 11px;
  }
  .caret {
    position: absolute;
    top: 45px;
    right: 12px;
  }
  .gear {
    position: relative;
    padding: 24px 0 0 33px;
  }
  .gear .dot {
    top: 21px;
    left: 84px;
  }

  /* 图表 */
  .legend text {
    font-size: 37px;
  }
  .legend .t35 {
    font-size: 35.500px;
  }
  .chip rect {
    fill: #f7f8fa;
    stroke: #dcdee2;
  }
  .arrow {
    fill: none;
    stroke-width: 2.800;
  }
  .watermark {
    font-size: 104px;
    font-weight: 900;
    fill: #f7f7f7;
  }
  .price {
    font-size: 41px;
    fill: #8c8c8c;
  }
  .price.t36 {
    font-size: 37px;
  }
  .mark {
    font-size: 41px;
    fill: #262626;
  }
  .mark-line {
    fill: none;
    stroke: #262626;
    stroke-width: 2.800;
  }
  .date {
    font-size: 37px;
    fill: #666;
  }

  .promo {
    height: 90px;
    margin: 18px 18px 0;
    padding: 0 35px 2px 30px;
    border-radius: 45px;
    display: flex;
    align-items: center;
    background: #fbeee6;
    color: #d0602c;
    font-size: 39px;
  }
  .marquee {
    width: 728px;
    margin-left: 135px;
    line-height: 60px;
    overflow: hidden;
    white-space: nowrap;
    -webkit-mask-image: linear-gradient(90deg, #000 95%, transparent);
    mask-image: linear-gradient(90deg, #000 95%, transparent);
  }
  .bar {
    width: 2px;
    height: 36px;
    margin: 0 15px 0 17px;
    background: #d0602c;
  }

  .sections {
    height: 106px;
    margin-top: 16px;
    padding: 0 28px 0 27px;
    display: grid;
    grid-template-columns: repeat(7, 1fr);
    border-top: 2px solid #d9d9d9;
    border-bottom: 2px solid #d9d9d9;
    font-size: 44px;
    color: #666;
  }
  .sections button {
    position: relative;
    padding-top: 2px;
  }
  .sections .active::after {
    margin-left: -29px;
  }

  .peek {
    position: relative;
    height: 35px;
    display: flex;
    justify-content: flex-end;
    overflow: hidden;
  }
  .cta {
    position: absolute;
    left: 846px;
    top: 30px;
    width: 182px;
    height: 30px;
    border-radius: 14px;
    background: #e08a45;
    box-shadow: 0 0 8px #f5d28e;
  }

  footer {
    height: 177px;
    border-top: 2px solid #d9d9d9;
    background: #f7f8fa;
    display: grid;
    grid-template-columns: 274px repeat(4, 1fr);
    font-size: 35px;
    color: #666;
  }
  .index {
    display: flex;
    flex-direction: column;
    align-items: center;
    padding-top: 9px;
  }
  .points {
    margin-top: 12px;
    font-size: 42px;
    letter-spacing: -1.400px;
    color: #cf3f38;
  }
  .row {
    width: 224px;
    margin: 8px 0 0 -4px;
    padding-left: 36px;
    box-sizing: content-box;
    display: flex;
    align-items: center;
    gap: 52px;
  }
  .pct {
    font-size: 38px;
    letter-spacing: 0;
    color: #cf3f38;
  }
  .item {
    position: relative;
    display: flex;
    flex-direction: column;
    align-items: center;
    padding-top: 7px;
  }
  .item span {
    margin-top: 19px;
  }
  .item .dot {
    top: 2px;
    left: 142px;
  }
</style>
